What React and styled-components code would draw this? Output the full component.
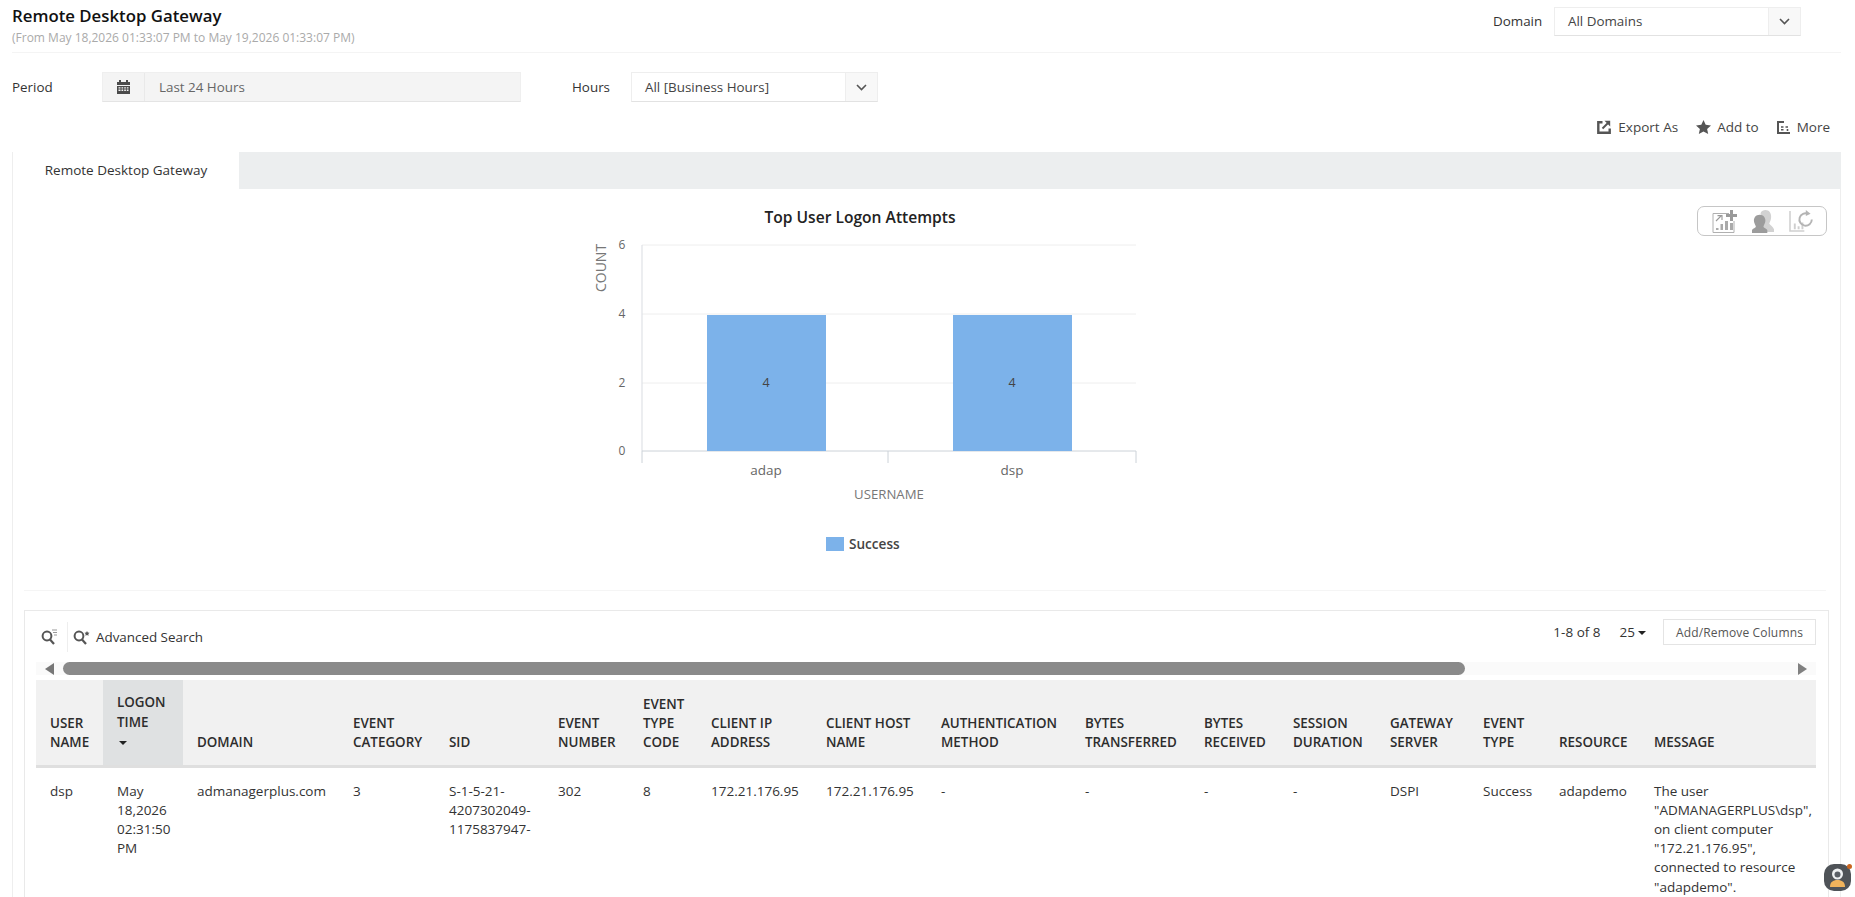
import React from "react";
import styled, { createGlobalStyle } from "styled-components";

const Global = createGlobalStyle`
  html, body { margin: 0; padding: 0; height: 897px; overflow: hidden; background: #fff; }
  body { font-family: "Open Sans", "Liberation Sans", sans-serif; font-size: 13.5px; color: #333; }
  * { box-sizing: border-box; }
`;

const Page = styled.div`
  width: 1855px; height: 897px; overflow: hidden;
  padding: 0 14px 0 12px; display: flex; flex-direction: column;
`;
const Header = styled.header`
  height: 53px; flex: none; display: flex; justify-content: space-between;
  border-bottom: 1px solid #f4f4f4; position: relative;
`;
const TitleBlock = styled.div` padding-top: 5px; `;
const Title = styled.h1`
  margin: 0; font-size: 16.8px; line-height: 22px; font-weight: 600; color: #111;
`;
const Subtitle = styled.div`
  margin-top: 2px; font-size: 12px; line-height: 18px; color: #aaa;
`;
const DomainGroup = styled.div`
  display: flex; align-items: flex-start; padding: 7px 40px 0 0;
`;
const FieldLabel = styled.label`
  font-size: 13.4px; line-height: ${p => p.$lh || 30}px; color: #333; width: ${p => p.$w}px; margin-left: ${p => p.$ml || 0}px; flex: none;
`;
const Select = styled.div`
  width: 247px; height: ${p => p.$h}px; display: flex; flex: none; background: #fff;
  border: 1px solid #eee; border-bottom-color: #e2e2e2;
`;
const SelectValue = styled.div`
  flex: 1; padding-left: 13px; font-size: 13.4px; line-height: ${p => p.$h - 2}px; color: #444;
`;
const SelectArrow = styled.div`
  width: 32px; flex: none; display: flex; align-items: center; justify-content: center;
  background: #f8f8f8; border-left: 1px solid #eee;
`;
const FilterRow = styled.div`
  display: flex; margin-top: 19px; height: 30px; flex: none;
`;
const PeriodField = styled.div`
  width: 419px; height: 30px; display: flex; flex: none; background: #f4f4f4;
  border: 1px solid #efefef; border-bottom-color: #e4e4e4;
`;
const PeriodIcon = styled.div`
  width: 42px; flex: none; display: flex; align-items: center; justify-content: center;
  border-right: 1px solid #e9e9e9;
`;
const PeriodValue = styled.div`
  padding-left: 14px; line-height: 28px; color: #666; font-size: 13.4px;
`;
const ActionRow = styled.div`
  display: flex; justify-content: flex-end; height: 24px; margin-top: 13px; padding-right: 11px; flex: none;
`;
const Action = styled.a`
  display: flex; align-items: center; gap: ${p => p.$gap}px; margin-left: ${p => p.$ml}px;
  font-size: 13.5px; color: #444; line-height: 24px;
`;
const TabBar = styled.div`
  height: 37px; margin-top: 13px; flex: none; background: #eceeef; display: flex;
`;
const Tab = styled.div`
  width: 227px; background: #fff; border-left: 1px solid #eee;
  text-align: center; font-size: 13.5px; line-height: 36px; color: #333;
`;
const Panel = styled.section`
  flex: 1; min-height: 0; border-left: 1px solid #eee; border-right: 1px solid #eee;
  padding: 0 11px 0 11px;
`;
const ChartSection = styled.div`
  height: 402px; display: flex; align-items: flex-start; border-bottom: 1px solid #f5f5f5; margin-right: 3px;
`;
const ChartFrame = styled.svg`
  width: 600px; height: 390px; margin: 11px 0 0 536px; flex: none; display: block;
`;
const ToolBox = styled.div`
  width: 130px; height: 30px; margin: 17px 0 0 537px; flex: none; display: flex; align-items: center; gap: 15px;
  padding: 0 0 0 14px; border: 1px solid #c6c6c6; border-radius: 7px; background: #fff;
`;
const TableBox = styled.div`
  margin-top: 19px; height: 290px; border: 1px solid #e9e9e9; border-bottom: 0; padding: 0 12px 0 11px;
`;
const Toolbar = styled.div`
  display: flex; justify-content: space-between; align-items: flex-start; height: 51px; padding-top: 8px;
`;
const ToolLeft = styled.div`
  display: flex; align-items: center; height: 30px; margin-top: 3px; padding-left: 5px;
`;
const ToolDivider = styled.span`
  width: 1px; height: 30px; background: #eee; margin: 0 5px 0 10px;
`;
const AdvText = styled.span`
  margin-left: 6px; font-size: 13.4px; color: #333;
`;
const ToolRight = styled.div`
  display: flex; align-items: center; height: 26px;
`;
const PageInfo = styled.span`
  font-size: 13.5px; color: #333;
`;
const PageSize = styled.span`
  margin: 0 17px 0 19px; font-size: 13.5px; color: #333; display: flex; align-items: center; gap: 3px;
`;
const Caret = styled.i`
  display: ${p => p.$block ? "block" : "inline-block"}; width: 0; height: 0;
  border-left: 4px solid transparent; border-right: 4px solid transparent; border-top: 4px solid #222;
  margin: ${p => p.$block ? "9px 0 7px 2px" : "2px 0 0"};
`;
const ColumnButton = styled.button`
  width: 153px; height: 26px; background: #fff; border: 1px solid #e4e4e4; padding: 0;
  font: 12px "Open Sans", sans-serif; color: #555; letter-spacing: .15px;
`;
const ScrollBar = styled.div`
  height: 13px; display: flex; align-items: center; padding: 0 9px; background: #fafafa;
`;
const ScrollArrow = styled.svg`
  width: 9px; height: 12px; flex: none; margin-left: ${p => p.$auto ? "auto" : "0"};
`;
const ScrollThumb = styled.div`
  width: 1402px; height: 13px; margin-left: 9px; background: #8a8a8a; border-radius: 7px;
`;
const Table = styled.table`
  width: 1780px; margin-top: 5px; table-layout: fixed; border-collapse: collapse;
`;
const Th = styled.th`
  height: 86px; padding: 0 2px 13px 14px; vertical-align: bottom; text-align: left;
  font-size: 13.4px; font-weight: 600; color: #2d2d2d;
  background: ${p => p.$sorted ? "#dfe1e2" : "#f1f1f1"};
  line-height: ${p => p.$sorted ? "20px" : "19px"};
  border-bottom: 3px solid #dfdfdf;
`;
const Td = styled.td`
  padding: 14px 2px 0 14px; vertical-align: top; font-size: 13.5px; line-height: 19.2px; color: #333;
`;

const columns = [
  ["USER NAME", 67], ["LOGON TIME", 80], ["DOMAIN", 156], ["EVENT CATEGORY", 96], ["SID", 109],
  ["EVENT NUMBER", 85], ["EVENT TYPE CODE", 68], ["CLIENT IP ADDRESS", 115], ["CLIENT HOST NAME", 115],
  ["AUTHENTICATION METHOD", 144], ["BYTES TRANSFERRED", 119], ["BYTES RECEIVED", 89], ["SESSION DURATION", 97],
  ["GATEWAY SERVER", 93], ["EVENT TYPE", 76], ["RESOURCE", 95], ["MESSAGE", 176],
];
const row = [
  "dsp", "May 18,2026 02:31:50 PM", "admanagerplus.com", "3", "S-1-5-21-4207302049-1175837947-",
  "302", "8", "172.21.176.95", "172.21.176.95", "-", "-", "-", "-", "DSPI", "Success", "adapdemo",
  "The user \"ADMANAGERPLUS\\dsp\", on client computer \"172.21.176.95\", connected to resource \"adapdemo\".",
];

const Chevron = () => (
  <svg width="11" height="7" viewBox="0 0 11 7"><path d="M1 1l4.5 4.5L10 1" fill="none" stroke="#555" strokeWidth="1.6" /></svg>
);
const CalendarIcon = () => (
  <svg width="13" height="14" viewBox="0 0 13 14" fill="#4b4b4b">
    <path d="M0 2h2V0h2v2h5V0h2v2h2v3H0z" />
    <path d="M0 6h13v8H0zM1.5 7.2v1.4h2V7.2zm3 0v1.4h1.7V7.2zm2.7 0v1.4h1.7V7.2zm2.6 0v1.4h1.7V7.2zM1.5 9.6V11h2V9.6zm3 0V11h1.7V9.6zm2.7 0V11h1.7V9.6zm2.6 0V11h1.7V9.6z" fillRule="evenodd" />
  </svg>
);
const ExportIcon = () => (
  <svg width="14" height="14" viewBox="0 0 14 14" fill="none" stroke="#555">
    <path d="M5.5 2.2H1.3V12.7H12.7V8.5" strokeWidth="2.4" />
    <path d="M5.5 8.5L11.5 2.5" strokeWidth="2" />
    <path d="M7.5 0.8h5.7v5.7z" fill="#555" stroke="none" />
  </svg>
);
const StarIcon = () => (
  <svg width="15" height="14" viewBox="0 0 15 14"><path d="M7.5 0l2.2 4.8 5.3.6-3.9 3.5 1.1 5.1-4.7-2.6L2.8 14l1.1-5.1L0 5.4l5.3-.6z" fill="#555" /></svg>
);
const MoreIcon = () => (
  <svg width="13" height="13" viewBox="0 0 13 13" fill="none" stroke="#555">
    <path d="M1 13V1h6" strokeWidth="2" /><path d="M0 12h13" strokeWidth="2" />
    <path d="M4 6h2.5M8.5 6H11M4 8.8h2.5M10.5 8v2" strokeWidth="1.6" />
  </svg>
);
const ChartAddIcon = () => (
  <svg width="25" height="23" viewBox="0 0 25 23" fill="none">
    <path d="M17 3.5H1v19h21V11" stroke="#b0b0b0" strokeWidth="1" />
    <path d="M4 11l5-5M5.5 5.6H10V10" stroke="#999" strokeWidth="1.1" />
    <path d="M4 18h2.5v2H4zM8.5 14H11v6H8.5zM13 11h3v9h-3zM18 13h3v7h-3z" fill="#aaa" />
    <path d="M18 0h3v4h4v3h-4v4h-3V7h-4V4h4z" fill="#9a9a9a" />
  </svg>
);
const UsersIcon = () => (
  <svg width="22" height="23" viewBox="0 0 23 24">
    <path d="M14 0c4 0 6 3 6 7 0 3-1 5-2 7 1 2 4 3 5 6v3H9V3c1-2 3-3 5-3z" fill="#d2d2d2" />
    <path d="M8 5c4 0 6 3 6 6 0 2-1 4-2 6 0 2 3 2 4 4v3H0v-3c1-2 4-2 4-4-1-2-2-4-2-6 0-3 2-6 6-6z" fill="#9c9c9c" />
  </svg>
);
const ChartRefreshIcon = () => (
  <svg width="24" height="22" viewBox="0 0 25 23" fill="none">
    <path d="M1 1v21h15" stroke="#cfcfcf" strokeWidth="1.6" />
    <path d="M5 14h2v6H5zM9 17h2v3H9zM13 13h2v7h-2z" fill="#cfcfcf" />
    <path d="M20 4a6.5 6.5 0 1 0 3.8 6" stroke="#b4b4b4" strokeWidth="2" />
    <path d="M17.5 0l5 3.8-5 2.6z" fill="#b4b4b4" />
  </svg>
);
const FilterSearchIcon = () => (
  <svg width="16" height="16" viewBox="0 0 16 16" fill="none" stroke="#555">
    <circle cx="6" cy="7" r="4.4" strokeWidth="2" /><path d="M9 10.5l4 4.5" strokeWidth="2.2" />
    <path d="M11 1h5M12 3.5h4M13 6h3" strokeWidth="1" stroke="#999" />
  </svg>
);
const AdvSearchIcon = () => (
  <svg width="17" height="16" viewBox="0 0 17 16" fill="none" stroke="#555">
    <circle cx="6" cy="7" r="4.4" strokeWidth="2" /><path d="M9 10.5l4 4.5" strokeWidth="2.2" />
    <path d="M14 2l.8 1.6 1.7.2-1.2 1.2.3 1.7-1.6-.8-1.6.8.3-1.7-1.2-1.2 1.7-.2z" fill="#555" stroke="none" />
  </svg>
);

const ChartBackdrop = () => (
  <g fill="none">
    <path d="M82 45H576M82 114H576M82 183H576" stroke="#eeeeee" />
    <path d="M82 45V251" stroke="#dfe2e6" strokeWidth="1.2" />
    <path d="M82 251H576M82 251v12M328 251v12M576 251v12" stroke="#ccd2d8" />
    <rect x="147" y="115" width="119" height="136" fill="#7cb2ea" />
    <rect x="393" y="115" width="119" height="136" fill="#7cb2ea" />
  </g>
);
const ChartLabel = styled.text`
  font-family: "Open Sans", sans-serif; font-size: ${p => p.$size || 12}px; fill: ${p => p.$fill || "#666"};
  font-weight: ${p => p.$weight || 400}; text-anchor: ${p => p.$anchor || "middle"};
`;
const Chart = () => (
  <ChartFrame viewBox="0 0 600 390">
    <ChartBackdrop />
    <ChartLabel x="300" y="23" $size={15.6} $weight={600} $fill="#222">Top User Logon Attempts</ChartLabel>
    {[["6", 49], ["4", 118], ["2", 187], ["0", 255]].map(([t, y]) => (
      <ChartLabel key={t} x="62" y={y} $fill="#666">{t}</ChartLabel>
    ))}
    <ChartLabel transform="translate(46 68) rotate(-90)" $size={14} $fill="#777">COUNT</ChartLabel>
    <ChartLabel x="206" y="187" $size={12.5} $fill="#444">4</ChartLabel>
    <ChartLabel x="452" y="187" $size={12.5} $fill="#444">4</ChartLabel>
    <ChartLabel x="206" y="275" $size={13.5} $fill="#666">adap</ChartLabel>
    <ChartLabel x="452" y="275" $size={13.5} $fill="#666">dsp</ChartLabel>
    <ChartLabel x="329" y="299" $size={13.2} $fill="#777">USERNAME</ChartLabel>
    <rect x="266" y="337" width="18" height="14" fill="#7cb2ea" />
    <ChartLabel x="289" y="349" $size={13.6} $weight={600} $fill="#444" $anchor="start">Success</ChartLabel>
  </ChartFrame>
);

const ChatBubble = styled.div`
  position: fixed; left: 1824px; top: 864px; width: 27px; height: 27px;
  border-radius: 10px; background: #4f5358;
  display: flex; align-items: center; justify-content: center;
`;
const ChatDot = styled.span`
  position: absolute; right: -1px; top: 0; width: 5px; height: 5px; border-radius: 50%; background: #c9641f;
`;

export default function App() {
  return (
    <>
      <Global />
      <Page>
        <Header>
          <TitleBlock>
            <Title>Remote Desktop Gateway</Title>
            <Subtitle>(From May 18,2026 01:33:07 PM to May 19,2026 01:33:07 PM)</Subtitle>
          </TitleBlock>
          <DomainGroup>
            <FieldLabel $w={61} $lh={29}>Domain</FieldLabel>
            <Select $h={29}>
              <SelectValue $h={29}>All Domains</SelectValue>
              <SelectArrow><Chevron /></SelectArrow>
            </Select>
          </DomainGroup>
        </Header>
        <FilterRow>
          <FieldLabel $w={90}>Period</FieldLabel>
          <PeriodField>
            <PeriodIcon><CalendarIcon /></PeriodIcon>
            <PeriodValue>Last 24 Hours</PeriodValue>
          </PeriodField>
          <FieldLabel $w={59} $ml={51}>Hours</FieldLabel>
          <Select $h={30}>
            <SelectValue $h={30}>All [Business Hours]</SelectValue>
            <SelectArrow><Chevron /></SelectArrow>
          </Select>
        </FilterRow>
        <ActionRow>
          <Action $ml={0} $gap={7}><ExportIcon />Export As</Action>
          <Action $ml={18} $gap={6}><StarIcon />Add to</Action>
          <Action $ml={18} $gap={7}><MoreIcon />More</Action>
        </ActionRow>
        <TabBar><Tab>Remote Desktop Gateway</Tab></TabBar>
        <Panel>
          <ChartSection>
            <Chart />
            <ToolBox><ChartAddIcon /><UsersIcon /><ChartRefreshIcon /></ToolBox>
          </ChartSection>
          <TableBox>
            <Toolbar>
              <ToolLeft>
                <FilterSearchIcon />
                <ToolDivider />
                <AdvSearchIcon />
                <AdvText>Advanced Search</AdvText>
              </ToolLeft>
              <ToolRight>
                <PageInfo>1-8 of 8</PageInfo>
                <PageSize>25<Caret /></PageSize>
                <ColumnButton>Add/Remove Columns</ColumnButton>
              </ToolRight>
            </Toolbar>
            <ScrollBar>
              <ScrollArrow viewBox="0 0 9 12"><path d="M9 0v12L0 6z" fill="#777" /></ScrollArrow>
              <ScrollThumb />
              <ScrollArrow $auto viewBox="0 0 9 12"><path d="M0 0v12l9-6z" fill="#808080" /></ScrollArrow>
            </ScrollBar>
            <Table>
              <colgroup>
                {columns.map(([name, w]) => <col key={name} width={w} />)}
              </colgroup>
              <thead>
                <tr>
                  {columns.map(([name], i) => (
                    <Th key={name} $sorted={i === 1}>
                      {name}
                      {i === 1 && <Caret $block />}
                    </Th>
                  ))}
                </tr>
              </thead>
              <tbody>
                <tr>{row.map((v, i) => <Td key={i}>{v}</Td>)}</tr>
              </tbody>
            </Table>
          </TableBox>
        </Panel>
      </Page>
      <ChatBubble>
        <svg width="17" height="21" viewBox="0 0 17 21">
          <circle cx="8.5" cy="7" r="5.5" fill="#eef0f2" />
          <circle cx="8.5" cy="7.5" r="3" fill="#5a5f66" />
          <path d="M1 20c0-5 3-7 7.5-7S16 15 16 20z" fill="#f0b35c" />
        </svg>
        <ChatDot />
      </ChatBubble>
    </>
  );
}
